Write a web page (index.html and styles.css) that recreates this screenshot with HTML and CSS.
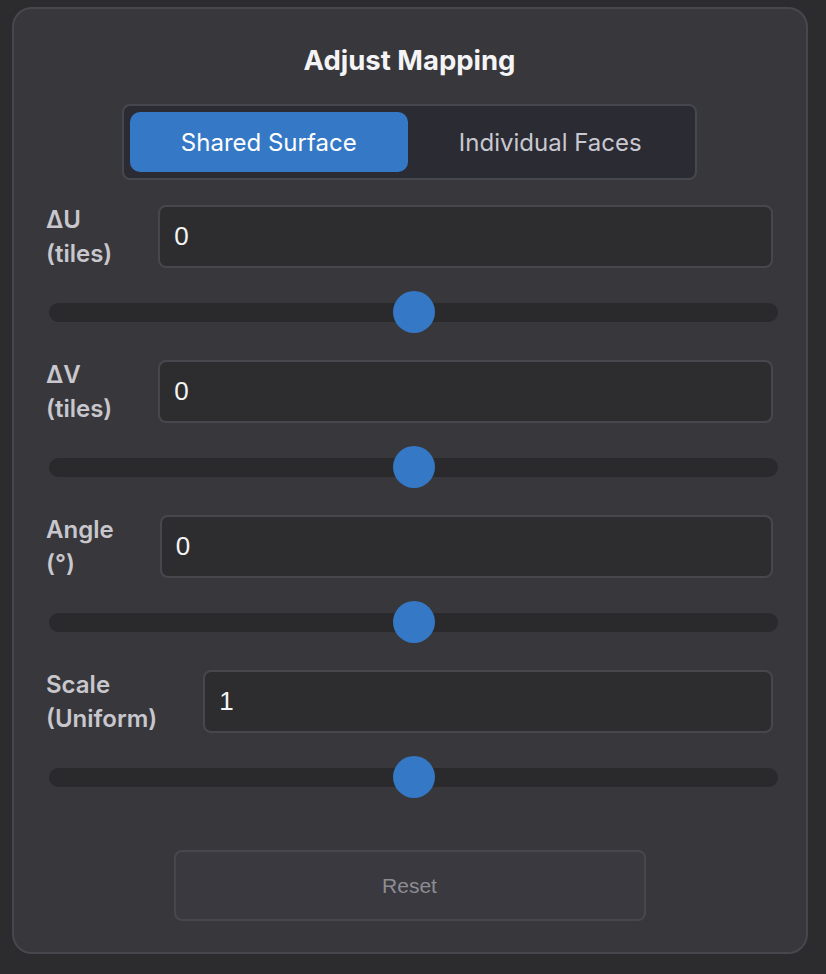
FILE: index.html
```html
<!DOCTYPE html>
<html lang="en">
<head>
<meta charset="utf-8">
<title>Adjust Mapping</title>
<link rel="stylesheet" href="styles.css">
</head>
<body>
<div class="panel">
  <h1 class="title">Adjust Mapping</h1>
  <div class="segment">
    <button class="seg-btn active">Shared Surface</button>
    <button class="seg-btn">Individual Faces</button>
  </div>

  <div class="group">
    <div class="row">
      <label class="label">ΔU<br>(tiles)</label>
      <input class="num" type="text" value="0">
    </div>
    <input class="slider" type="range" min="-10" max="10" step="0.01" value="0">
  </div>

  <div class="group">
    <div class="row">
      <label class="label">ΔV<br>(tiles)</label>
      <input class="num" type="text" value="0">
    </div>
    <input class="slider" type="range" min="-10" max="10" step="0.01" value="0">
  </div>

  <div class="group">
    <div class="row">
      <label class="label">Angle<br>(°)</label>
      <input class="num" type="text" value="0">
    </div>
    <input class="slider" type="range" min="-180" max="180" step="1" value="0">
  </div>

  <div class="group">
    <div class="row">
      <label class="label">Scale<br>(Uniform)</label>
      <input class="num" type="text" value="1">
    </div>
    <input class="slider" type="range" min="0" max="2" step="0.01" value="1">
  </div>

  <div class="actions">
    <button class="reset">Reset</button>
  </div>
</div>
</body>
</html>
```

FILE: styles.css
```css
html, body {
  margin: 0;
  padding: 0;
  background: #2c2c2e;
}

body {
  padding: 7px 0 0 12px;
  font-family: Inter, "Noto Sans", sans-serif;
}

.panel {
  box-sizing: border-box;
  width: 796px;
  height: 947px;
  background: #38373c;
  border: 2px solid #48474d;
  border-radius: 20px;
  padding: 34px 33px 0 32px;
  display: flex;
  flex-direction: column;
}

.title {
  margin: 0;
  text-align: center;
  font-size: 27.5px;
  line-height: 34px;
  font-weight: 700;
  color: #f4f4f6;
}

.segment {
  box-sizing: border-box;
  align-self: center;
  width: 575px;
  height: 76px;
  margin-top: 27px;
  margin-bottom: 25px;
  background: #2a2b33;
  border: 2px solid #47474e;
  border-radius: 8px;
  padding: 6px;
  display: flex;
  gap: 4px;
}

.seg-btn {
  flex: 1;
  border: none;
  border-radius: 10px;
  background: transparent;
  color: #c9c8d0;
  font-family: Inter, "Noto Sans", sans-serif;
  font-size: 24px;
  padding: 0;
}

.seg-btn.active {
  background: #3478c6;
  color: #ffffff;
}

.group {
  display: flex;
  flex-direction: column;
}

.row {
  display: flex;
  align-items: center;
  gap: 46px;
  height: 63px;
}

.label {
  flex: none;
  font-size: 24px;
  line-height: 34px;
  font-weight: 600;
  color: #c8c7cd;
}

.num {
  box-sizing: border-box;
  flex: 1;
  min-width: 0;
  height: 63px;
  background: #2d2d30;
  border: 2px solid #48474d;
  border-radius: 8px;
  padding: 0 14px;
  color: #f4f4f4;
  font-family: "Liberation Sans", Arial, sans-serif;
  font-size: 26px;
  outline: none;
}

.slider {
  -webkit-appearance: none;
  appearance: none;
  display: block;
  height: 42px;
  margin: 23px -5px 27px 3px;
  background: transparent;
  outline: none;
}

.slider::-webkit-slider-runnable-track {
  height: 19px;
  border-radius: 10px;
  background: #2a2a2d;
}

.slider::-webkit-slider-thumb {
  -webkit-appearance: none;
  appearance: none;
  width: 42px;
  height: 42px;
  border-radius: 50%;
  background: #3478c6;
  margin-top: -11.5px;
  border: none;
}

.actions {
  display: flex;
  justify-content: center;
  margin-top: 25px;
}

.reset {
  box-sizing: border-box;
  width: 472px;
  height: 71px;
  background: #3a393f;
  border: 2px solid #48474d;
  border-radius: 8px;
  color: #8d8c92;
  font-family: "Liberation Sans", Arial, sans-serif;
  font-size: 21px;
}
```
